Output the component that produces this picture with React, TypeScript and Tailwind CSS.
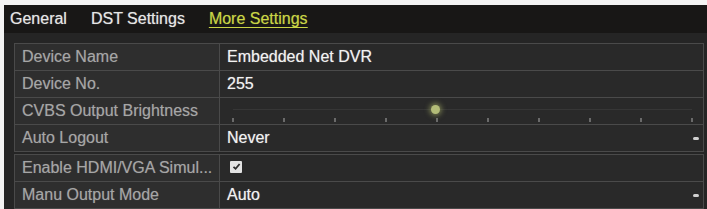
import React from "react";

const ticks = Array.from({ length: 10 }, (_, i) => i);

function Row({
  label,
  children,
}: {
  label: string;
  children?: React.ReactNode;
}) {
  return (
    <div className="flex h-[27px] border-b border-[#4a4a4a]">
      <div className="w-[205px] shrink-0 border-r border-[#4a4a4a] bg-[#2e2e2e] pl-[7px] flex items-center text-[16px] text-[#a6a6a6] whitespace-nowrap overflow-hidden [text-shadow:0_0_1px_rgba(200,200,200,0.35)]">
        {label}
      </div>
      <div className="flex-1 bg-[#292929] flex items-center text-[16px] text-[#f2f2f2] relative [text-shadow:0_0_1px_rgba(255,255,255,0.5)]">
        {children}
      </div>
    </div>
  );
}

function Arrow() {
  return <div className="ml-auto mr-[4px] w-[6px] h-[3px] rounded-full bg-[#d0d0d0]" />;
}

export default function App() {
  return (
    <div className="w-[707px] h-[209px] bg-[#f3f3f3] pt-[5px] pl-[4px] overflow-hidden font-['Liberation_Sans',Arial,sans-serif]">
      <div className="h-[204px] bg-[#252525] flex flex-col">
        <div className="h-[28px] shrink-0 bg-[#181716] flex items-center pl-[6px] gap-[24px] text-[16px] text-[#e6e6e6] [text-shadow:0_0_1px_rgba(255,255,255,0.5)]">
          <span>General</span>
          <span>DST Settings</span>
          <span className="text-[#c9d545] underline underline-offset-[3px] decoration-[1px] [text-shadow:0_0_1px_rgba(200,213,69,0.5)]">More Settings</span>
        </div>
        <div className="pl-[10px] pr-[3px] pt-[10px]">
          <div className="border-l border-r border-t border-[#4a4a4a]">
            <Row label="Device Name">
              <span className="pl-[7px]">Embedded Net DVR</span>
            </Row>
            <Row label="Device No.">
              <span className="pl-[7px]">255</span>
            </Row>
            <Row label="CVBS Output Brightness">
              <div className="absolute left-[13px] right-[11px] top-[11px] h-[1px] bg-[#363636]" />
              <div className="absolute left-[12px] right-[10px] bottom-[2px] flex justify-between items-end">
                {ticks.map((t) => (
                  <div key={t} className="w-[2px] h-[4px] bg-[#6a6a6a]" />
                ))}
              </div>
              <div className="absolute left-[211px] top-[7px] w-[9px] h-[9px] rounded-full bg-[#b3bc78] shadow-[0_0_5px_2px_rgba(180,190,110,0.5)]" />
            </Row>
            <Row label="Auto Logout">
              <span className="pl-[7px]">Never</span>
              <Arrow />
            </Row>
          </div>
          <div className="h-[2px]" />
          <div className="border-l border-r border-t border-[#4a4a4a]">
            <Row label="Enable HDMI/VGA Simul...">
              <div className="ml-[10px] mt-[-3px] w-[12px] h-[12px] bg-[#e2e2e2] rounded-[1px] flex items-center justify-center">
                <svg width="9" height="9" viewBox="0 0 9 9">
                  <path d="M1.5 4.8 L3.6 6.8 L7.6 2" stroke="#2a2a2a" strokeWidth="1.8" fill="none" />
                </svg>
              </div>
            </Row>
            <Row label="Manu Output Mode">
              <span className="pl-[7px]">Auto</span>
              <Arrow />
            </Row>
          </div>
        </div>
      </div>
    </div>
  );
}
